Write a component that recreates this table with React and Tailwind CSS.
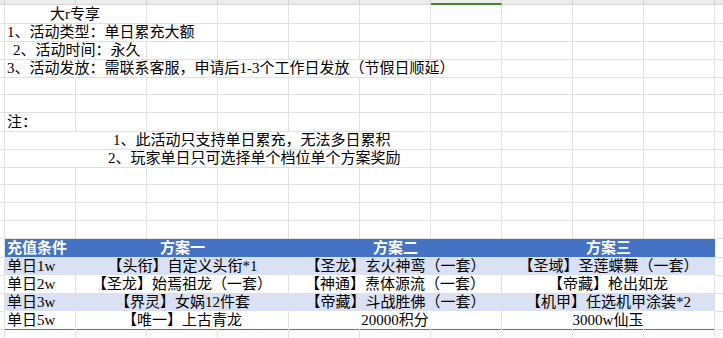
const grid = 'grid grid-cols-[5px_repeat(10,71px)_1fr]';
const cell = 'border-r border-b border-[#e1e1e1]';

const Blank = ({ n = 1 }) =>
  Array.from({ length: n }).map((_, i) => <div key={i} className={cell} />);

const Row = ({ children }) => (
  <div className={`${grid} h-[18px]`}>
    <div className={cell} />
    {children}
    <div className="border-b border-[#e1e1e1]" />
  </div>
);

const EmptyRow = () => (
  <Row>
    <Blank n={10} />
  </Row>
);

const rows = [
  { cond: '单日1w', a: '【头衔】自定义头衔*1', b: '【圣龙】玄火神鸾（一套）', c: '【圣域】圣莲蝶舞（一套）', tint: true },
  { cond: '单日2w', a: '【圣龙】始焉祖龙（一套）', b: '【神通】焘体源流（一套）', c: '【帝藏】枪出如龙', tint: false },
  { cond: '单日3w', a: '【界灵】女娲12件套', b: '【帝藏】斗战胜佛（一套）', c: '【机甲】任选机甲涂装*2', tint: true },
  { cond: '单日5w', a: '【唯一】上古青龙', b: '20000积分', c: '3000w仙玉', tint: false, last: true },
];

const App = () => {
  return (
    <div className="h-[338px] w-[723px] overflow-hidden bg-white font-['Liberation_Serif','Noto_Sans_CJK_SC',serif] text-[15px] leading-[18px] text-black">
      {/* column header strip, cut off at the top */}
      <div className={`${grid} h-[5px] bg-[#ececec]`}>
        <div className="border-r border-b border-[#d4d4d4]" />
        <div className="border-r border-b border-[#d4d4d4]" />
        <div className="border-r border-b border-[#d4d4d4]" />
        <div className="border-r border-b border-[#d4d4d4]" />
        <div className="border-r border-b border-[#d4d4d4]" />
        <div className="border-r border-b border-[#d4d4d4]" />
        <div className="border-r border-b border-[#d4d4d4]" />
        <div className="border-r border-b-2 border-[#d4d4d4] border-b-[#3d8b27]" />
        <div className="border-r border-b border-[#d4d4d4]" />
        <div className="border-r border-b border-[#d4d4d4]" />
        <div className="border-r border-b border-[#d4d4d4]" />
        <div className="border-b border-[#d4d4d4]" />
      </div>

      <Row>
        <div className={`${cell} col-span-2 whitespace-nowrap pl-[45px]`}>大r专享</div>
        <Blank n={8} />
      </Row>
      <Row>
        <div className={`${cell} col-span-3 whitespace-nowrap pl-[2px]`}>1、活动类型：单日累充大额</div>
        <Blank n={7} />
      </Row>
      <Row>
        <div className={`${cell} col-span-2 whitespace-nowrap pl-[8px]`}>2、活动时间：永久</div>
        <Blank n={8} />
      </Row>
      <Row>
        <div className={`${cell} col-span-7 whitespace-nowrap pl-[2px]`}>
          3、活动发放：需联系客服，申请后1-3个工作日发放（节假日顺延）
        </div>
        <Blank n={3} />
      </Row>
      <EmptyRow />
      <EmptyRow />
      <Row>
        <div className={`${cell} whitespace-nowrap pl-[2px]`}>注：</div>
        <Blank n={9} />
      </Row>
      <Row>
        <div className={`${cell} col-span-6 whitespace-nowrap pl-[108px]`}>1、此活动只支持单日累充，无法多日累积</div>
        <Blank n={4} />
      </Row>
      <Row>
        <div className={`${cell} col-span-6 whitespace-nowrap pl-[103px]`}>2、玩家单日只可选择单个档位单个方案奖励</div>
        <Blank n={4} />
      </Row>
      <EmptyRow />
      <EmptyRow />
      <EmptyRow />
      <EmptyRow />

      {/* recharge table */}
      <div className={`${grid} h-[18px]`}>
        <div className={cell} />
        <div className="whitespace-nowrap border-b border-[#8ea9db] bg-[#4472c4] pl-[2px] font-bold text-white">充值条件</div>
        <div className="col-span-3 whitespace-nowrap border-b border-[#8ea9db] bg-[#4472c4] text-center font-bold text-white">方案一</div>
        <div className="col-span-3 whitespace-nowrap border-b border-[#8ea9db] bg-[#4472c4] text-center font-bold text-white">方案二</div>
        <div className="col-span-3 whitespace-nowrap border-b border-[#8ea9db] bg-[#4472c4] text-center font-bold text-white">方案三</div>
        <div className="border-b border-[#e1e1e1]" />
      </div>
      {rows.map((r) => {
        const line = r.last ? 'border-b border-b-[#4472c4]' : 'border-b border-b-[#8ea9db]';
        const fill = r.tint ? 'bg-[#d9e1f2]' : 'bg-white border-r border-r-[#e1e1e1]';
        return (
          <div key={r.cond} className={`${grid} h-[18px]`}>
            <div className={cell} />
            <div className={`${line} ${fill} whitespace-nowrap pl-[2px]`}>{r.cond}</div>
            <div className={`${line} ${fill} col-span-3 whitespace-nowrap text-center`}>{r.a}</div>
            <div className={`${line} ${fill} col-span-3 whitespace-nowrap text-center`}>{r.b}</div>
            <div className={`${line} ${fill} col-span-3 whitespace-nowrap text-center`}>{r.c}</div>
            <div className="border-b border-[#e1e1e1]" />
          </div>
        );
      })}
      <EmptyRow />
    </div>
  );
};

export default App;
